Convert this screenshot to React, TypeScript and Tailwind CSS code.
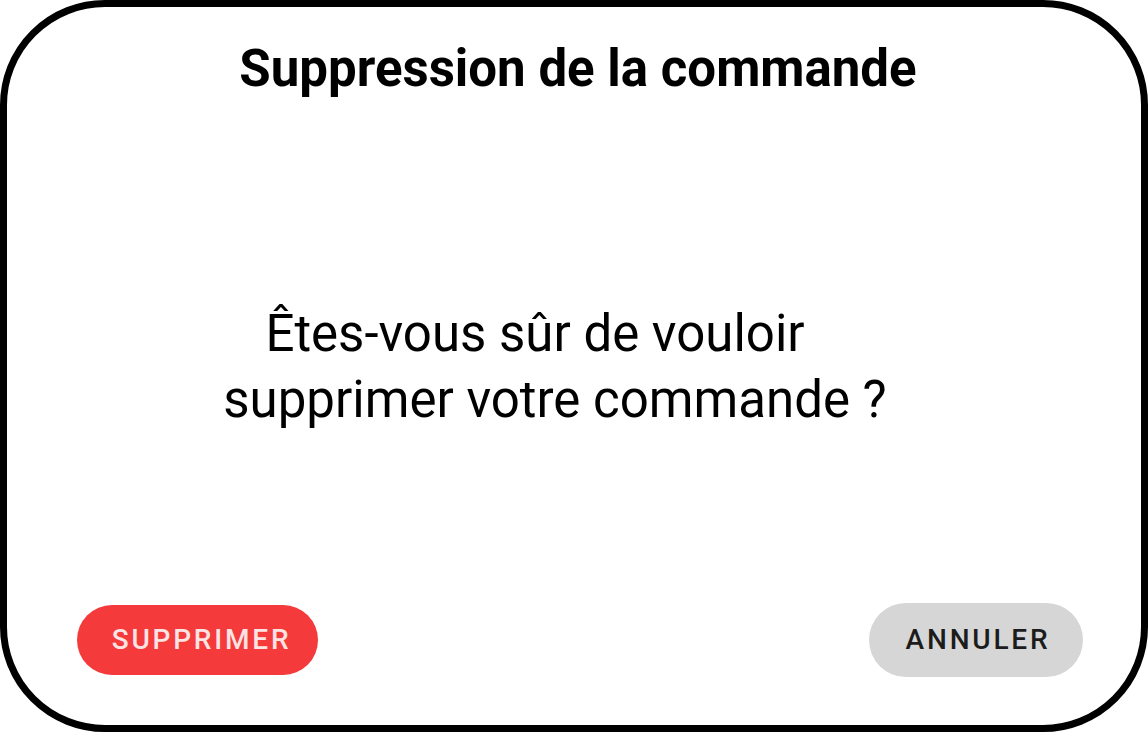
export default function App() {
  return (
    <div className="w-[1148px] h-[732px] bg-white font-['Roboto',sans-serif]">
      <div className="w-full h-full border-[7px] border-black rounded-[105px] flex flex-col items-center">
        <h1 className="mt-[30px] pl-[8px] text-[51px] leading-[64px] font-bold text-black">
          Suppression de la commande
        </h1>
        <p className="mt-[200px] pr-[38px] text-[51px] leading-[66px] text-black text-center">
          <span className="block pr-[40px]">Êtes-vous sûr de vouloir</span>
          <span className="block">supprimer votre commande ?</span>
        </p>
        <div className="mt-auto mb-[48px] w-full flex items-center justify-between pl-[70px] pr-[58px]">
          <button className="w-[241px] h-[70px] pl-[8px] rounded-full bg-[#f43a3b] text-[#fde3e3] text-[28px] font-medium tracking-[0.1em]">
            SUPPRIMER
          </button>
          <button className="w-[214px] h-[74px] pl-[4px] rounded-full bg-[#d6d6d6] text-[#1c1c1c] text-[28px] font-medium tracking-[0.1em]">
            ANNULER
          </button>
        </div>
      </div>
    </div>
  );
}
